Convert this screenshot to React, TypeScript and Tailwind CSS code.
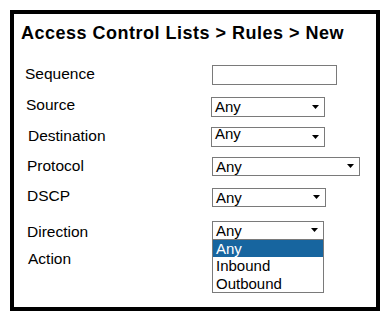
import type {ReactNode} from "react";

interface RowProps {
    label: string;
    rowClass: string;
    labelClass: string;
    children: ReactNode;
}

function Row({label, rowClass, labelClass, children}: RowProps) {
    return (
        <div className={`grid grid-cols-[198px_auto] items-start ${rowClass}`}>
            <span className={`text-[15.5px] leading-[20px] text-black ${labelClass}`}>{label}</span>
            <div>{children}</div>
        </div>
    );
}

interface SelectProps {
    value: string;
    boxClass: string;
    textClass?: string;
    children?: ReactNode;
}

function FakeSelect({value, boxClass, textClass = "leading-[18px]", children}: SelectProps) {
    return (
        <div className={`relative ${boxClass}`}>
            <div className="flex h-full items-start justify-between border border-[#7a7a7a] bg-white pl-[3px] pr-[5px]">
                <span className={`text-[15px] text-black ${textClass}`}>{value}</span>
                <svg width="7" height="4" viewBox="0 0 7 4" className="self-center">
                    <polygon points="0,0 7,0 3.5,4" fill="#000"/>
                </svg>
            </div>
            {children}
        </div>
    );
}

function App() {
    return (
        <div className="h-[320px] w-[390px] bg-white pl-[10px] pt-[10px] font-['Liberation_Sans',Arial,sans-serif]">
            <div className="h-[301px] w-[370px] border-4 border-black">
                <h1 className="mt-[8px] pl-[7px] text-[18px] font-bold leading-[22px] tracking-[0.5px] text-black">
                    Access Control Lists &gt; Rules &gt; New
                </h1>

                <div className="mt-[19.6px]">
                    <Row label="Sequence" rowClass="h-[31px]" labelClass="pl-[11px]">
                        <div className="mt-[1.4px] h-[20px] w-[125px] border border-[#7a7a7a] bg-white"></div>
                    </Row>

                    <Row label="Source" rowClass="h-[31px]" labelClass="pl-[12px]">
                        <FakeSelect value="Any" boxClass="mt-[2.4px] -ml-[1px] h-[20px] w-[114px]"/>
                    </Row>

                    <Row label="Destination" rowClass="h-[30.7px]" labelClass="pl-[14px]">
                        <FakeSelect value="Any" boxClass="mt-[1.4px] -ml-[1px] h-[20px] w-[114px]" textClass="leading-[12px]"/>
                    </Row>

                    <Row label="Protocol" rowClass="h-[29.3px]" labelClass="pl-[13px]">
                        <FakeSelect value="Any" boxClass="mt-[0.7px] h-[19px] w-[148px]"/>
                    </Row>

                    <Row label="DSCP" rowClass="h-[35.4px]" labelClass="pl-[13px]">
                        <FakeSelect value="Any" boxClass="mt-[2.4px] h-[19px] w-[114px]"/>
                    </Row>

                    <Row label="Direction" rowClass="relative z-10 h-[27.9px]" labelClass="mt-[1.3px] pl-[13px]">
                        <FakeSelect value="Any" boxClass="h-[19px] w-[112px]" textClass="mt-[0.5px] leading-[17px]">
                            <ul className="absolute left-0 top-full w-full border-x border-b border-[#7a7a7a] bg-white text-[15px] leading-[17.5px] text-black">
                                <li className="bg-[#17659f] pl-[3px] text-white">Any</li>
                                <li className="pl-[3px]">Inbound</li>
                                <li className="pl-[3px]">Outbound</li>
                            </ul>
                        </FakeSelect>
                    </Row>

                    <Row label="Action" rowClass="h-[20px]" labelClass="pl-[14px]">
                        <span></span>
                    </Row>
                </div>
            </div>
        </div>
    );
}

export default App;
